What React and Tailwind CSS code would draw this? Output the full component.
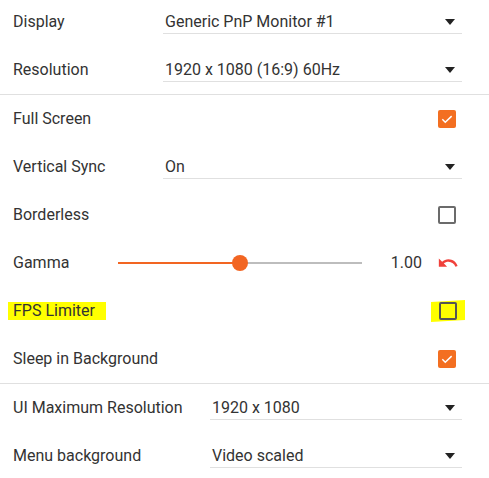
const font = { fontFamily: 'Roboto, "Open Sans", sans-serif' };

function Caret() {
  return (
    <svg width="10" height="6" viewBox="0 0 10 6" className="shrink-0">
      <path d="M0 0h10L5 6z" fill="#222" />
    </svg>
  );
}

function Select({ value, left }) {
  return (
    <div className={`${left} mr-[27px] flex-1 h-[24px] flex items-center justify-between border-b border-[#e0e0e0] pl-[2px] pr-[7px]`}>
      <span className="text-[16px] text-[#333]">{value}</span>
      <Caret />
    </div>
  );
}

function Checkbox({ checked }) {
  if (checked) {
    return (
      <div className="w-[18px] h-[18px] rounded-[2px] bg-[#f36f21] flex items-center justify-center">
        <svg width="14" height="14" viewBox="0 0 24 24">
          <path d="M4 12.5l5 5L20 7" fill="none" stroke="#fff" strokeWidth="2.6" />
        </svg>
      </div>
    );
  }
  return <div className="w-[18px] h-[18px] rounded-[2px] border-2 border-[#6b6b6b]" />;
}

function Row({ children }) {
  return <div className="h-12 flex items-center">{children}</div>;
}

function Label({ children, w }) {
  return <div className={`${w} shrink-0 pl-[13px] text-[16px] text-[#333]`}>{children}</div>;
}

function CheckRow({ label, checked }) {
  return (
    <Row>
      <Label w="flex-1">{label}</Label>
      <div className="mr-[33px]">
        <Checkbox checked={checked} />
      </div>
    </Row>
  );
}

export default function App() {
  const pct = 0.5;
  return (
    <div className="w-[489px] h-[478px] overflow-hidden bg-white" style={font}>
      <div className="-mt-[2px]">
        <Row>
          <Label w="w-[163px]">Display</Label>
          <Select value="Generic PnP Monitor #1" />
        </Row>
        <Row>
          <Label w="w-[163px]">Resolution</Label>
          <Select value="1920 x 1080 (16:9) 60Hz" />
        </Row>
        <div className="h-px bg-[#e0e0e0]" />
        <CheckRow label="Full Screen" checked />
        <Row>
          <Label w="w-[163px]">Vertical Sync</Label>
          <Select value="On" />
        </Row>
        <CheckRow label="Borderless" checked={false} />
        <Row>
          <Label w="w-[118px]">Gamma</Label>
          <div className="relative w-[244px] h-4 flex items-center">
            <div className="h-[2px] bg-[#f26522]" style={{ width: `${pct * 100}%` }} />
            <div className="h-[2px] flex-1 bg-[#bdbdbd]" />
            <div
              className="absolute top-0 w-4 h-4 rounded-full bg-[#f26522]"
              style={{ left: `calc(${pct * 100}% - 8px)` }}
            />
          </div>
          <div className="w-[60px] text-right text-[16px] text-[#333]">1.00</div>
          <div className="ml-[15px]">
            <svg width="22" height="22" viewBox="0 0 24 24">
              <path
                d="M12.5 8c-2.65 0-5.05.99-6.9 2.6L2 7v9h9l-3.62-3.62c1.39-1.16 3.16-1.88 5.12-1.88 3.54 0 6.55 2.31 7.6 5.5l2.37-.78C21.08 11.03 17.15 8 12.5 8z"
                fill="#f0413b"
              />
            </svg>
          </div>
        </Row>
        <Row>
          <div className="flex-1 pl-[8px]">
            <span className="inline-block bg-[#ffff00] pl-[5px] pr-[11px] leading-[18px] text-[16px] text-[#333]">
              FPS Limiter
            </span>
          </div>
          <div className="mr-[24px] bg-[#ffff00] px-[8px] py-[1px] -skew-y-3">
            <div className="skew-y-3">
              <div className="w-[18px] h-[18px] rounded-[2px] border-2 border-[#555]" />
            </div>
          </div>
        </Row>
        <CheckRow label="Sleep in Background" checked />
        <div className="h-px bg-[#e0e0e0]" />
        <Row>
          <Label w="w-[210px]">UI Maximum Resolution</Label>
          <Select value="1920 x 1080" />
        </Row>
        <Row>
          <Label w="w-[210px]">Menu background</Label>
          <Select value="Video scaled" />
        </Row>
      </div>
    </div>
  );
}
